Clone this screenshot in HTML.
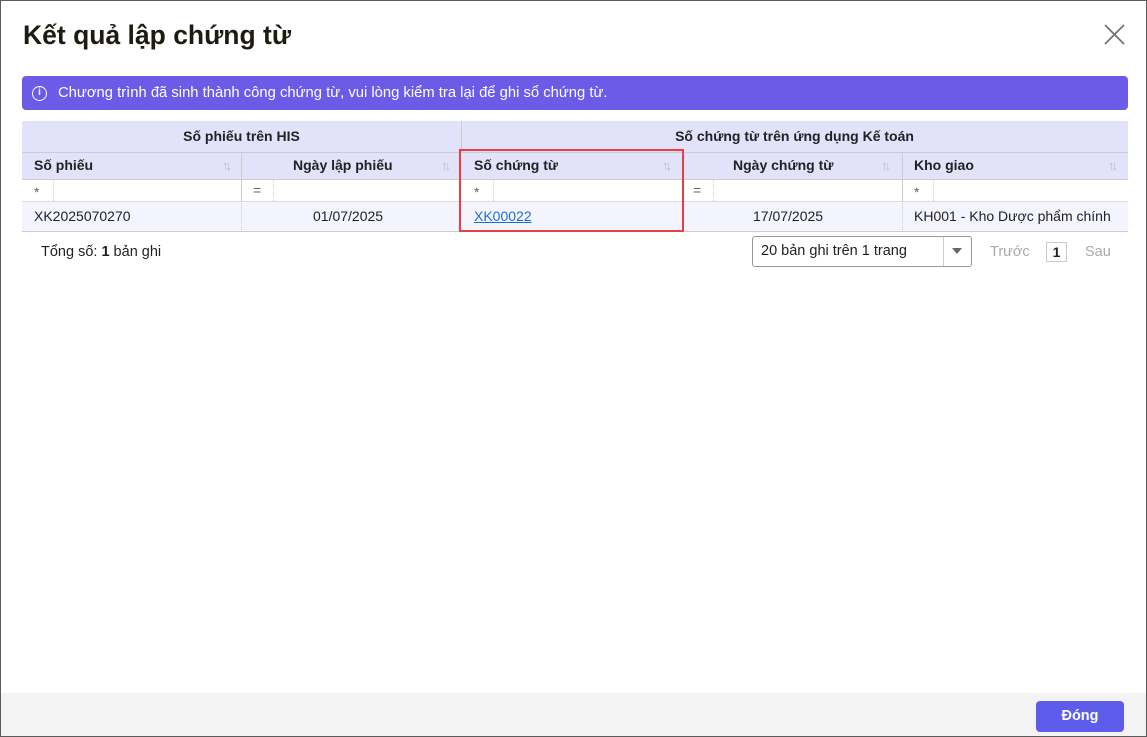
<!DOCTYPE html>
<html><head><meta charset="utf-8"><style>
*{box-sizing:border-box;margin:0;padding:0}
body{width:1147px;height:737px;overflow:hidden;background:#fff;font-family:"Liberation Sans",sans-serif;color:#222;position:relative}
.frame{position:absolute;left:0;top:0;width:1147px;height:737px;border:1px solid #5a5a5a}
.abs{position:absolute}
h1{position:absolute;left:23px;top:20px;font-size:26.5px;font-weight:bold;color:#1e1c10}
.banner{left:22px;top:76px;width:1106px;height:34px;background:#6b5be6;border-radius:4px;color:#fff;font-size:14.8px;line-height:34px;padding-left:36px}
.banner .ic{position:absolute;left:10px;top:10px;width:15px;height:15px;border:1.3px solid #fff;border-radius:50%;font-size:10px;line-height:12px;text-align:center;font-weight:bold}
.c{position:absolute;font-size:14px;white-space:nowrap}
.hd{background:#e2e2fb;font-weight:bold;color:#222}
.sort{position:absolute;color:#bbb;font-size:13px;letter-spacing:-3px}
</style></head><body>
<div class="frame"></div>
<h1>Kết quả lập chứng từ</h1>
<svg class="abs" style="left:1103px;top:23px" width="24" height="24"><path d="M2 2L21 21M21 2L2 21" stroke="#6e6e6e" stroke-width="1.6"/></svg>
<div class="abs banner"><span class="ic">i</span>Chương trình đã sinh thành công chứng từ, vui lòng kiểm tra lại để ghi sổ chứng từ.</div>

<div class="abs hd" style="left:22px;top:121px;width:1106px;height:58px"></div>
<div class="abs" style="left:22px;top:152px;width:1106px;height:1px;background:#ccc"></div>
<div class="abs" style="left:461px;top:121px;width:1px;height:31px;background:#ccc"></div>
<div class="c" style="left:22px;top:128px;width:439px;text-align:center;font-weight:bold">Số phiếu trên HIS</div>
<div class="c" style="left:461px;top:128px;width:667px;text-align:center;font-weight:bold">Số chứng từ trên ứng dụng Kế toán</div>
<div class="abs" style="left:241px;top:152px;width:1px;height:80px;background:#ccc"></div>
<div class="abs" style="left:683px;top:152px;width:1px;height:80px;background:#ccc"></div>
<div class="abs" style="left:902px;top:152px;width:1px;height:80px;background:#ccc"></div>
<div class="c" style="left:34px;top:157px;font-weight:bold">Số phiếu</div>
<div class="c" style="left:293px;top:157px;font-weight:bold">Ngày lập phiếu</div>
<div class="c" style="left:474px;top:157px;font-weight:bold">Số chứng từ</div>
<div class="c" style="left:733px;top:157px;font-weight:bold">Ngày chứng từ</div>
<div class="c" style="left:914px;top:157px;font-weight:bold">Kho giao</div>
<span class="sort" style="left:222px;top:158px">↑↓</span>
<span class="sort" style="left:441px;top:158px">↑↓</span>
<span class="sort" style="left:662px;top:158px">↑↓</span>
<span class="sort" style="left:881px;top:158px">↑↓</span>
<span class="sort" style="left:1108px;top:158px">↑↓</span>
<div class="abs" style="left:22px;top:179px;width:1106px;height:1px;background:#ccc"></div>
<div class="c" style="left:34px;top:184px;color:#666">*</div>
<div class="c" style="left:253px;top:182px;color:#666">=</div>
<div class="c" style="left:474px;top:184px;color:#666">*</div>
<div class="c" style="left:693px;top:182px;color:#666">=</div>
<div class="c" style="left:914px;top:184px;color:#666">*</div>
<div class="abs" style="left:53px;top:180px;width:0;height:21px;border-left:1px dotted #ccc"></div>
<div class="abs" style="left:273px;top:180px;width:0;height:21px;border-left:1px dotted #ccc"></div>
<div class="abs" style="left:493px;top:180px;width:0;height:21px;border-left:1px dotted #ccc"></div>
<div class="abs" style="left:713px;top:180px;width:0;height:21px;border-left:1px dotted #ccc"></div>
<div class="abs" style="left:933px;top:180px;width:0;height:21px;border-left:1px dotted #ccc"></div>
<div class="abs" style="left:22px;top:201px;width:1106px;height:31px;background:#f3f4fd;border-top:1px solid #ddd;border-bottom:1px solid #ccc"></div>
<div class="abs" style="left:241px;top:201px;width:1px;height:31px;background:#f3f4fd;border-left:1px dotted #ccc"></div>
<div class="abs" style="left:683px;top:201px;width:1px;height:31px;background:#f3f4fd;border-left:1px dotted #ccc"></div>
<div class="abs" style="left:902px;top:201px;width:1px;height:31px;background:#f3f4fd;border-left:1px dotted #ccc"></div>
<div class="c" style="left:34px;top:208px">XK2025070270</div>
<div class="c" style="left:313px;top:208px">01/07/2025</div>
<div class="c" style="left:474px;top:208px;color:#1a6fd6;text-decoration:underline">XK00022</div>
<div class="c" style="left:753px;top:208px">17/07/2025</div>
<div class="c" style="left:914px;top:208px">KH001 - Kho Dược phẩm chính</div>
<div class="abs" style="left:459px;top:149px;width:225px;height:83px;border:2px solid #e84040"></div>

<div class="c" style="left:41px;top:244px;font-size:14.5px">Tổng số: <b>1</b> bản ghi</div>
<div class="abs" style="left:752px;top:236px;width:220px;height:31px;border:1px solid #999;border-radius:3px"></div>
<div class="abs" style="left:943px;top:237px;width:1px;height:29px;background:#ccc"></div>
<div class="c" style="left:761px;top:243px;font-size:14.5px">20 bản ghi trên 1 trang</div>
<svg class="abs" style="left:952px;top:248px" width="10" height="6"><path d="M0 0H10L5 6Z" fill="#666"/></svg>
<div class="c" style="left:990px;top:244px;font-size:14.5px;color:#aaa">Trước</div>
<div class="abs" style="left:1046px;top:242px;width:21px;height:20px;border:1px solid #ccc;font-size:14px;font-weight:bold;text-align:center;line-height:18px">1</div>
<div class="c" style="left:1085px;top:244px;font-size:14.5px;color:#aaa">Sau</div>

<div class="abs" style="left:1px;top:693px;width:1145px;height:43px;background:#f3f3f3"></div>
<div class="abs" style="left:1036px;top:701px;width:88px;height:31px;background:#5d5ceb;border-radius:4px;color:#fff;font-weight:bold;font-size:14.5px;text-align:center;line-height:31px">Đóng</div>
</body></html>
